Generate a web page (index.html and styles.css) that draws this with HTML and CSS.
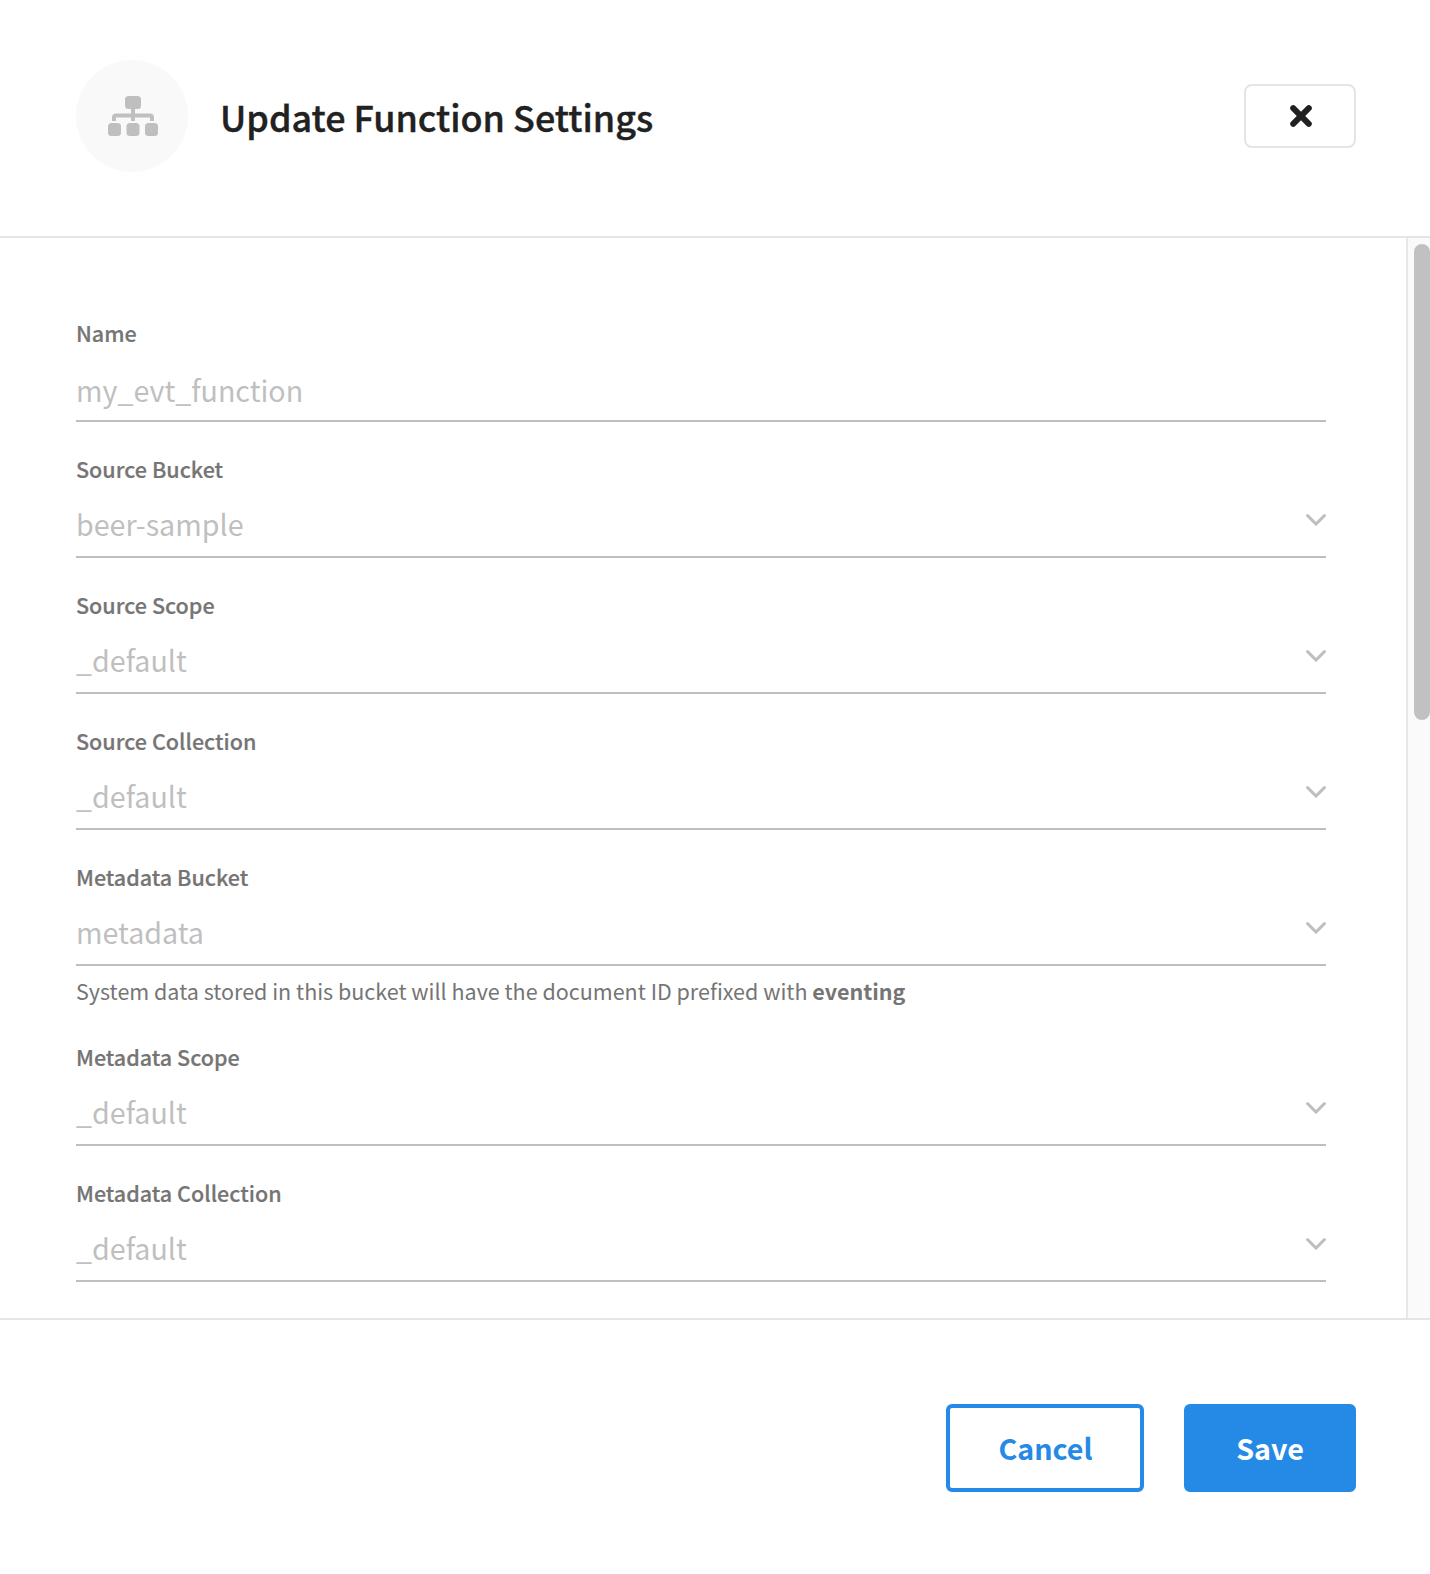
FILE: index.html
```html
<!DOCTYPE html>
<html lang="en">
<head>
<meta charset="utf-8">
<title>Update Function Settings</title>
<link rel="stylesheet" href="styles.css">
</head>
<body>
<div class="dialog">
  <header class="header">
    <div class="badge">
      <svg width="50" height="40" viewBox="0 0 50 40" fill="#bfbfbf">
        <rect x="17" y="0" width="16" height="13" rx="3.500"/>
        <path d="M23 12h4v5.500h15a4 4 0 0 1 4 4V25h-4v-3.500H27V25h-4v-3.500H8V25H4v-3.500a4 4 0 0 1 4-4h15z"/>
        <rect x="0" y="27" width="13" height="13" rx="3.500"/>
        <rect x="18.5" y="27" width="13" height="13" rx="3.500"/>
        <rect x="37" y="27" width="13" height="13" rx="3.500"/>
      </svg>
    </div>
    <h1 class="title">Update Function Settings</h1>
    <button class="close" aria-label="Close">
      <svg width="22" height="22" viewBox="0 0 22 22" fill="none" stroke="#212121" stroke-width="6" stroke-linecap="round"><path d="M3.2 3.2l15.6 15.6M18.8 3.2L3.2 18.8"/></svg>
    </button>
  </header>
  <main class="body">
    <form class="form">
      <div class="field"><div class="label">Name</div><div class="value input"><span>my_evt_function</span></div></div>
      <div class="field"><div class="label">Source Bucket</div><div class="value"><span>beer-sample</span><svg class="chevron" viewBox="0 0 20 12"><path d="M1.6 1.6L10 10l8.400-8.400"/></svg></div></div>
      <div class="field"><div class="label">Source Scope</div><div class="value"><span>_default</span><svg class="chevron" viewBox="0 0 20 12"><path d="M1.6 1.6L10 10l8.400-8.400"/></svg></div></div>
      <div class="field"><div class="label">Source Collection</div><div class="value"><span>_default</span><svg class="chevron" viewBox="0 0 20 12"><path d="M1.6 1.6L10 10l8.400-8.400"/></svg></div></div>
      <div class="field"><div class="label">Metadata Bucket</div><div class="value"><span>metadata</span><svg class="chevron" viewBox="0 0 20 12"><path d="M1.6 1.6L10 10l8.400-8.400"/></svg></div>
        <div class="hint">System data stored in this bucket will have the document ID prefixed with <strong>eventing</strong></div></div>
      <div class="field"><div class="label">Metadata Scope</div><div class="value"><span>_default</span><svg class="chevron" viewBox="0 0 20 12"><path d="M1.6 1.6L10 10l8.400-8.400"/></svg></div></div>
      <div class="field"><div class="label">Metadata Collection</div><div class="value"><span>_default</span><svg class="chevron" viewBox="0 0 20 12"><path d="M1.6 1.6L10 10l8.400-8.400"/></svg></div></div>
    </form>
    <div class="track"><div class="thumb"></div></div>
  </main>
  <footer class="footer">
    <button class="btn cancel">Cancel</button>
    <button class="btn save">Save</button>
  </footer>
</div>
</body>
</html>
```

FILE: styles.css
```css
* { box-sizing: border-box; }
body {
  margin: 0;
  background: #fff;
  font-family: "Noto Sans CJK SC", "Noto Sans", sans-serif;
}
.dialog {
  display: flex;
  flex-direction: column;
  width: 1430px;
  height: 1574px;
  overflow: hidden;
}
.header {
  display: flex;
  align-items: center;
  height: 238px;
  padding: 0 74px 4px 76px;
  border-bottom: 2px solid #e5e5e5;
}
.badge {
  display: flex;
  align-items: center;
  justify-content: center;
  width: 112px;
  height: 112px;
  padding: 0 0 0 2px;
  border-radius: 50%;
  background: #f9f9f9;
}
.title {
  flex: 1;
  margin: 0 0 0 32px;
  color: #212121;
  font-size: 35.9px;
  font-weight: 500;
  line-height: 56px;
  -webkit-text-stroke: 0.4px #212121;
}
.close {
  display: flex;
  align-items: center;
  justify-content: center;
  width: 112px;
  height: 64px;
  padding: 0 0 0 2px;
  border: 2px solid #e5e5e5;
  border-radius: 8px;
  background: #fff;
}
.body {
  display: flex;
  height: 1080px;
}
.form {
  display: flex;
  flex: 1;
  flex-direction: column;
  gap: 32px;
  padding: 80px 80px 0 76px;
}
.label {
  color: #757575;
  font-size: 21.55px;
  font-weight: 500;
  line-height: 30px;
  -webkit-text-stroke: 0.2px #757575;
}
.value {
  display: flex;
  justify-content: space-between;
  height: 74px;
  padding-top: 18px;
  border-bottom: 2px solid #bfbfbf;
  color: #bfbfbf;
  font-size: 28.65px;
  line-height: 44px;
}
.input { padding-top: 20px; }
.chevron {
  width: 20px;
  height: 12px;
  margin-top: 12px;
  fill: none;
  stroke: #bfbfbf;
  stroke-width: 3;
  stroke-linecap: round;
}
.hint {
  padding: 10px 0 4px;
  color: #757575;
  font-size: 21.5px;
  line-height: 30px;
}
.hint strong { font-weight: 700; }
.track {
  width: 24px;
  padding: 6px 0 0 6px;
  border-left: 2px solid #e8e8e8;
  background: #fafafa;
}
.thumb {
  width: 16px;
  height: 476px;
  border-radius: 8px;
  background: #c1c1c1;
}
.footer {
  display: flex;
  flex: 1;
  justify-content: flex-end;
  align-items: flex-start;
  gap: 40px;
  padding: 84px 74px 0 0;
  border-top: 2px solid #e5e5e5;
}
.btn {
  height: 88px;
  padding: 0;
  border: 4px solid #2589e6;
  border-radius: 6px;
  font-family: inherit;
  font-size: 28.65px;
  font-weight: 700;
  line-height: 44px;
}
.cancel { width: 198px; padding-left: 1px; background: #fff; color: #2589e6; }
.save { width: 172px; background: #2589e6; color: #fff; }
```
